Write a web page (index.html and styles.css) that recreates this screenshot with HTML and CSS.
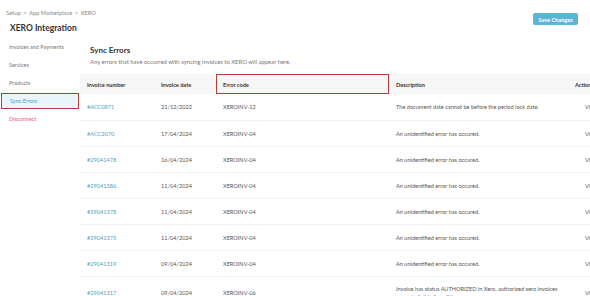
FILE: index.html
```html
<!DOCTYPE html>
<html>
<head>
<meta charset="utf-8">
<link rel="stylesheet" href="styles.css">
</head>
<body>
<div class="page">
  <header class="topbar">
    <div class="heading">
      <div class="crumbs">Setup <span class="sep">&gt;</span> App Marketplace <span class="sep">&gt;</span> XERO</div>
      <h1 class="title">XERO Integration</h1>
    </div>
    <button class="save">Save Changes</button>
  </header>
  <div class="content">
    <nav class="sidebar">
      <a class="nav-item">Invoices and Payments</a>
      <a class="nav-item">Services</a>
      <a class="nav-item">Products</a>
      <a class="nav-item active">Sync Errors</a>
      <a class="nav-item danger">Disconnect</a>
    </nav>
    <main class="main">
      <div class="intro">
        <h2 class="section-title">Sync Errors</h2>
        <p class="section-sub">Any errors that have occurred with syncing invoices to XERO will appear here.</p>
      </div>
      <table class="errors">
        <colgroup>
          <col class="c-num"><col class="c-date"><col class="c-code"><col class="c-desc"><col class="c-act">
        </colgroup>
        <thead>
          <tr>
            <th>Invoice number</th>
            <th>Invoice date</th>
            <th class="marked">Error code</th>
            <th>Description</th>
            <th>Action</th>
          </tr>
        </thead>
        <tbody>
          <tr><td class="link">#ACC0871</td><td>21/12/2022</td><td>XEROINV-12</td><td class="desc">The document date cannot be before the period lock date.</td><td class="act">View</td></tr>
          <tr><td class="link">#ACC2070</td><td>17/04/2024</td><td>XEROINV-04</td><td class="desc">An unidentified error has occured.</td><td class="act">View</td></tr>
          <tr><td class="link">#29041478</td><td>16/04/2024</td><td>XEROINV-04</td><td class="desc">An unidentified error has occured.</td><td class="act">View</td></tr>
          <tr><td class="link">#29041386</td><td>11/04/2024</td><td>XEROINV-04</td><td class="desc">An unidentified error has occured.</td><td class="act">View</td></tr>
          <tr><td class="link">#29041378</td><td>11/04/2024</td><td>XEROINV-04</td><td class="desc">An unidentified error has occured.</td><td class="act">View</td></tr>
          <tr><td class="link">#29041375</td><td>11/04/2024</td><td>XEROINV-04</td><td class="desc">An unidentified error has occured.</td><td class="act">View</td></tr>
          <tr><td class="link">#29041319</td><td>09/04/2024</td><td>XEROINV-04</td><td class="desc">An unidentified error has occured.</td><td class="act">View</td></tr>
          <tr class="tall"><td class="link">#29041317</td><td>09/04/2024</td><td>XEROINV-06</td><td class="desc">Invoice has status AUTHORIZED in Xero, authorized xero invoices are not eligible for editing.</td><td class="act">View</td></tr>
        </tbody>
      </table>
    </main>
  </div>
</div>
</body>
</html>
```

FILE: styles.css
```css
* { box-sizing: border-box; }
html, body {
  margin: 0;
  padding: 0;
  background: #ffffff;
  width: 590px;
  height: 296px;
  overflow: hidden;
}
body {
  font-family: "Lato", "Noto Sans", sans-serif;
  color: #555;
  font-size: 5.6px;
}
.page { width: 590px; }

.topbar {
  display: flex;
  justify-content: space-between;
  align-items: flex-start;
  height: 37px;
  padding: 10px 12px 0 6px;
}
.crumbs {
  font-size: 5.8px;
  line-height: 6px;
  color: #8a8a8a;
}
.crumbs .sep { margin: 0 1px; }
.title {
  margin: 7px 0 0 4px;
  font-size: 8.5px;
  line-height: 10px;
  font-weight: 700;
  color: #333;
}
.save {
  margin-top: 3px;
  border: none;
  border-radius: 2px;
  background: #5bb5d6;
  color: #fff;
  font-family: inherit;
  font-size: 5.6px;
  font-weight: 700;
  height: 12px;
  width: 45px;
  padding: 0;
}

.content {
  display: flex;
}
.sidebar {
  width: 80px;
  flex: none;
  display: flex;
  flex-direction: column;
  padding-top: 1px;
}
.nav-item {
  display: block;
  height: 18px;
  line-height: 18px;
  padding-left: 9px;
  color: #777;
  font-size: 5.5px;
}
.nav-item.active {
  margin: 1px;
  height: 16px;
  line-height: 14px;
  padding-left: 8px;
  background: #e8f5fb;
  color: #4aa3c8;
  border: 1.5px solid #b83a3a;
}
.nav-item.danger { color: #e8606e; }

.main {
  flex: 1;
  min-width: 0;
}
.intro { padding: 0 0 0 10px; }
.section-title {
  margin: 8px 0 0 0;
  font-size: 8px;
  line-height: 10px;
  font-weight: 700;
  color: #333;
}
.section-sub {
  margin: 3px 0 0 0;
  font-size: 5.9px;
  line-height: 7px;
  color: #777;
}

.errors {
  margin-top: 9px;
  border-collapse: collapse;
  table-layout: fixed;
  width: 530px;
}
.c-num { width: 74px; }
.c-date { width: 62px; }
.c-code { width: 173px; }
.c-desc { width: 179px; }
.c-act { width: 42px; }
.errors th {
  background: #f7f7f7;
  height: 20px;
  text-align: left;
  padding: 0 0 0 7px;
  font-size: 5.6px;
  font-weight: 700;
  color: #333;
}
.errors th.marked {
  outline: 1.5px solid #b83a3a;
  outline-offset: -1.5px;
}
.errors td {
  height: 26px;
  padding: 0 0 0 7px;
  font-size: 5.6px;
  color: #555;
  border-bottom: 1px solid #f3f3f3;
  vertical-align: middle;
}
.errors td.link { color: #4aa3c8; }
.errors td.desc { padding-right: 8px; }
.errors td.act { padding-left: 17px; }
.errors tr.tall td {
  height: 34px;
  line-height: 8px;
}
```
